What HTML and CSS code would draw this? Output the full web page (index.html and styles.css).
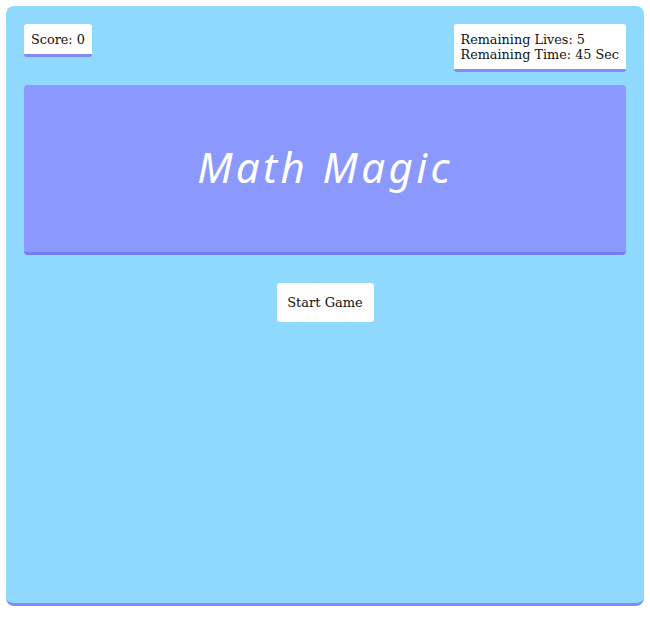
FILE: index.html
```html
<!DOCTYPE html>
<html>
<head>
<meta charset="utf-8">
<link rel="stylesheet" href="styles.css">
</head>
<body>
<div class="game">
  <div class="top">
    <div class="card">Score: 0</div>
    <div class="card">Remaining Lives: 5<br>Remaining Time: 45 Sec</div>
  </div>
  <div class="banner"><h1 class="title">Math Magic</h1></div>
  <div class="actions"><button class="start">Start Game</button></div>
</div>
</body>
</html>
```
FILE: styles.css
```css
html, body { margin: 0; padding: 0; background: #fff; }
body { padding: 6px; font-family: "DejaVu Serif", serif; }
.game {
  box-sizing: border-box;
  height: 600px;
  background: #8fd9ff;
  border-radius: 8px;
  border-bottom: 3px solid #8389f6;
  padding: 18px;
}
.top { display: flex; justify-content: space-between; align-items: flex-start; }
.card {
  background: #fff;
  border-radius: 3px;
  border-bottom: 3px solid #8389f6;
  padding: 8px 7px 7px;
  font-size: 12.8px;
  line-height: 15px;
  color: #111;
}
.banner {
  margin-top: 13px;
  height: 163px;
  padding-bottom: 4px;
  background: #8b99ff;
  border-radius: 4px;
  border-bottom: 3px solid #6f7ff2;
  display: flex;
  align-items: center;
  justify-content: center;
}
.title {
  margin: 0;
  color: #fff;
  font-family: "Noto Sans", sans-serif;
  font-style: italic;
  font-weight: 400;
  font-size: 42px;
  letter-spacing: 3.4px;
}
.actions { display: flex; justify-content: center; margin-top: 28px; }
.start {
  background: #fff;
  border: none;
  border-radius: 3px;
  width: 97px;
  height: 39px;
  font-family: "DejaVu Serif", serif;
  font-size: 13px;
  color: #111;
  padding: 0;
}
```
